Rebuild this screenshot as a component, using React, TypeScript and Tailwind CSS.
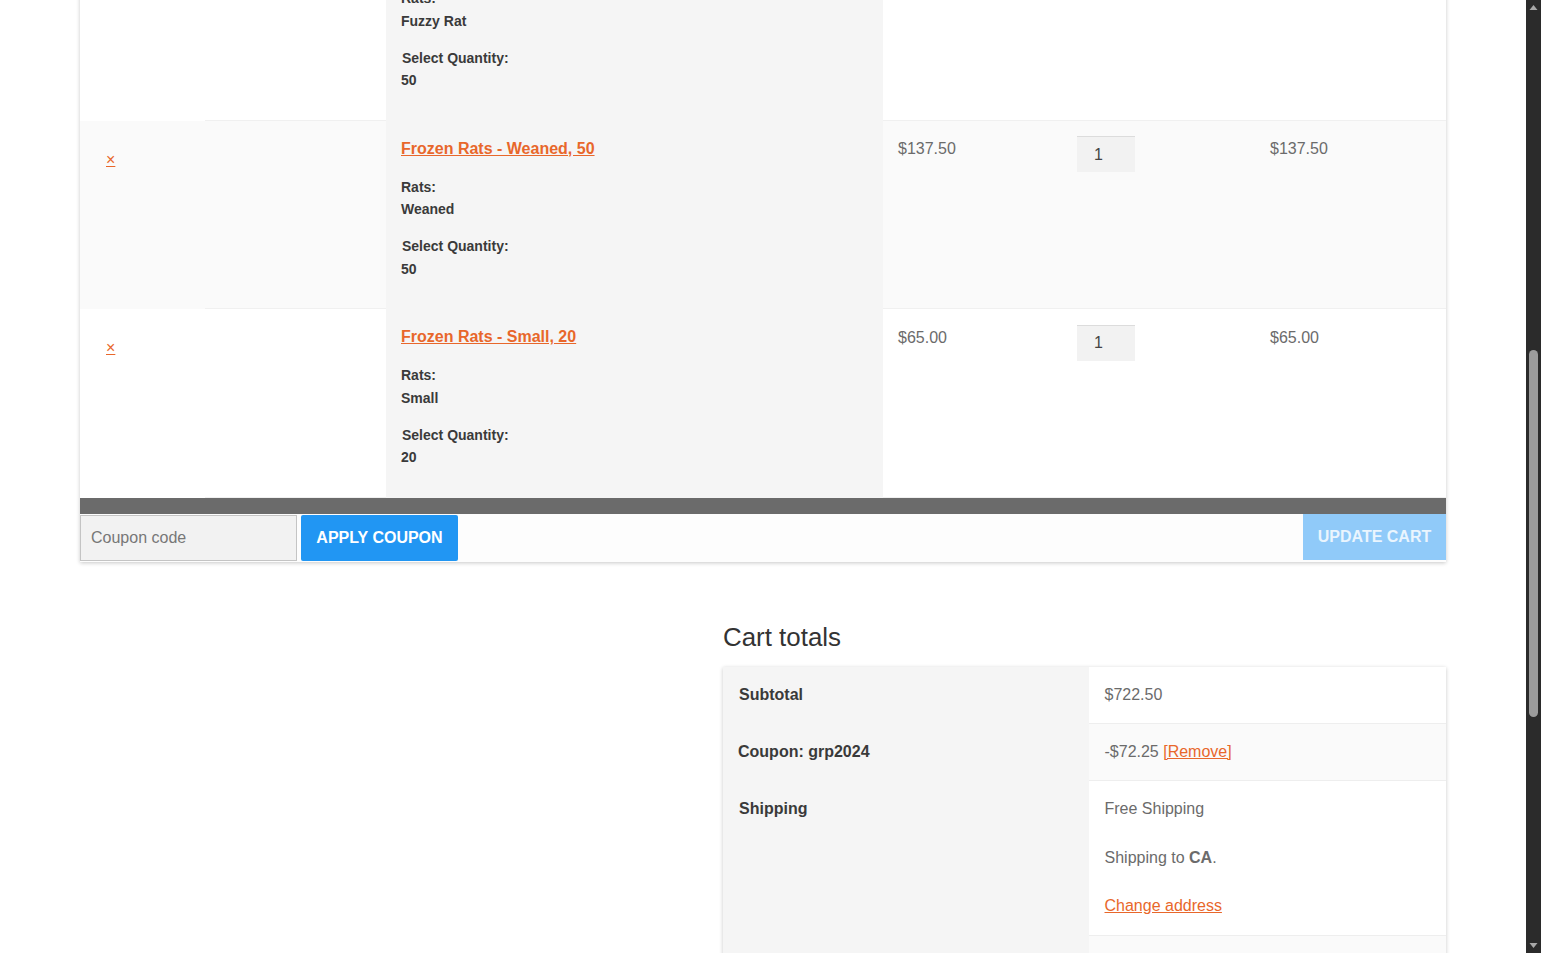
const font = { fontFamily: '"Liberation Sans", Arial, sans-serif' };

const items = [
  { name: "Frozen Rats - Fuzzy Rat, 50", rat: "Fuzzy Rat", qty: "50", price: "$137.50", alt: false },
  { name: "Frozen Rats - Weaned, 50", rat: "Weaned", qty: "50", price: "$137.50", alt: true },
  { name: "Frozen Rats - Small, 20", rat: "Small", qty: "20", price: "$65.00", alt: false },
];

function CartRow({ item }: { item: (typeof items)[number] }) {
  return (
    <div className={`flex h-[188.6px] ${item.alt ? "bg-[#fafafa]" : "bg-white"}`}>
      <div className="w-[125px] shrink-0 pl-[26px] pt-[27px]">
        <a href="#" className="text-[16px] leading-[18px] text-[#e8672b] underline">×</a>
      </div>
      <div className="w-[181px] shrink-0 border-b border-[#f0f0f0]" />
      <div className="w-[497px] shrink-0 bg-[#f5f5f5] pl-[15px] pt-[18px] text-[14px] font-bold text-[#3a3a3a]">
        <a href="#" className="block text-[16px] leading-[20px] text-[#e8672b] underline">{item.name}</a>
        <p className="mt-[16.8px] leading-[22.4px]">Rats:</p>
        <p className="mt-[0.3px] leading-[22.4px]">{item.rat}</p>
        <p className="mt-[14.6px] pl-px leading-[22.4px]">Select Quantity:</p>
        <p className="leading-[22.4px]">{item.qty}</p>
      </div>
      <div className="flex flex-1 border-b border-[#f0f0f0] text-[16px] text-[#6b6b6b]">
        <div className="w-[179px] shrink-0 pl-[15px] pt-[18.3px] leading-[20px]">{item.price}</div>
        <div className="w-[193px] shrink-0 pl-[15px] pt-[15.2px]">
          <input
            readOnly
            defaultValue="1"
            className="h-[36.5px] w-[58px] border-t border-[#dcdcdc] bg-[#f2f2f2] pl-[17px] text-[16px] text-[#444] outline-none"
          />
        </div>
        <div className="flex-1 pl-[15px] pt-[18.3px] leading-[20px]">{item.price}</div>
      </div>
    </div>
  );
}

function TotalsRow({ label, className, labelClass, children, alt, last }: { label: string; className?: string; labelClass?: string; children: React.ReactNode; alt?: boolean; last?: boolean }) {
  return (
    <div className={`flex ${className}`}>
      <div className={`w-[366px] shrink-0 bg-[#f5f5f5] pt-[18px] text-[16px] font-bold leading-[20px] text-[#3a3a3a] ${labelClass ?? "pl-[16px]"}`}>{label}</div>
      <div className={`flex-1 pl-[15.5px] pt-[18px] text-[16px] leading-[20px] text-[#6b6b6b] ${alt ? "bg-[#fafafa]" : "bg-white"} ${last ? "" : "border-b border-[#eeeeee]"}`}>
        {children}
      </div>
    </div>
  );
}

function Scrollbar() {
  return (
    <div className="relative h-full w-[15px] shrink-0 bg-[#2b2b2b]">
      <svg className="absolute left-[3px] top-[4px]" width="9" height="7" viewBox="0 0 9 7">
        <path d="M4.5 1 L8.5 6 L0.5 6 Z" fill="#a8a8a8" />
      </svg>
      <div className="absolute left-[3px] top-[350px] h-[367px] w-[9px] rounded-full bg-[#9b9b9b]" />
      <svg className="absolute bottom-[4px] left-[3px]" width="9" height="7" viewBox="0 0 9 7">
        <path d="M0.5 1 L8.5 1 L4.5 6 Z" fill="#a8a8a8" />
      </svg>
    </div>
  );
}

export default function App() {
  return (
    <div className="flex h-[953px] overflow-hidden bg-white" style={font}>
      <main className="flex-1 overflow-hidden px-[80px]">
        <div className="-mt-[67.8px] shadow-[0_1px_4px_rgba(0,0,0,0.22)]">
          <CartRow item={items[0]} />
          <CartRow item={items[1]} />
          <CartRow item={items[2]} />
          <div className="h-[16px] bg-[#6b6b6b]" />
          <div className="flex h-[48px] items-start justify-between bg-[#fdfdfd]">
            <div className="flex gap-[4px] pt-px">
              <input
                readOnly
                placeholder="Coupon code"
                className="h-[46px] w-[217px] border border-[#c4c4c4] bg-[#f2f2f2] px-[10px] text-[16px] outline-none placeholder:text-[#777]"
              />
              <button className="h-[46px] w-[157px] rounded-[2px] bg-[#2196f3] text-[16px] font-bold text-white">APPLY COUPON</button>
            </div>
            <button className="h-[46px] w-[143px] bg-[#90caf9] text-[16px] font-bold text-[#eaf5fe]">UPDATE CART</button>
          </div>
        </div>
        <div className="ml-[643px] mt-[60px]">
          <h2 className="text-[25.9px] font-normal leading-[30px] text-[#333]">Cart totals</h2>
          <div className="mt-[15px] shadow-[0_1px_4px_rgba(0,0,0,0.22)]">
            <TotalsRow label="Subtotal" className="h-[57px]">$722.50</TotalsRow>
            <TotalsRow label="Coupon: grp2024" className="h-[57px]" labelClass="pl-[15px]" alt>
              -$72.25 <a href="#" className="text-[#e8672b] underline">[Remove]</a>
            </TotalsRow>
            <TotalsRow label="Shipping" className="h-[155px]">
              <p>Free Shipping</p>
              <p className="mt-[29px]">Shipping to <strong>CA</strong>.</p>
              <a href="#" className="mt-[28px] block text-[#e8672b] underline">Change address</a>
            </TotalsRow>
            <TotalsRow label="" className="h-[60px]" alt last>{null}</TotalsRow>
          </div>
        </div>
      </main>
      <Scrollbar />
    </div>
  );
}
